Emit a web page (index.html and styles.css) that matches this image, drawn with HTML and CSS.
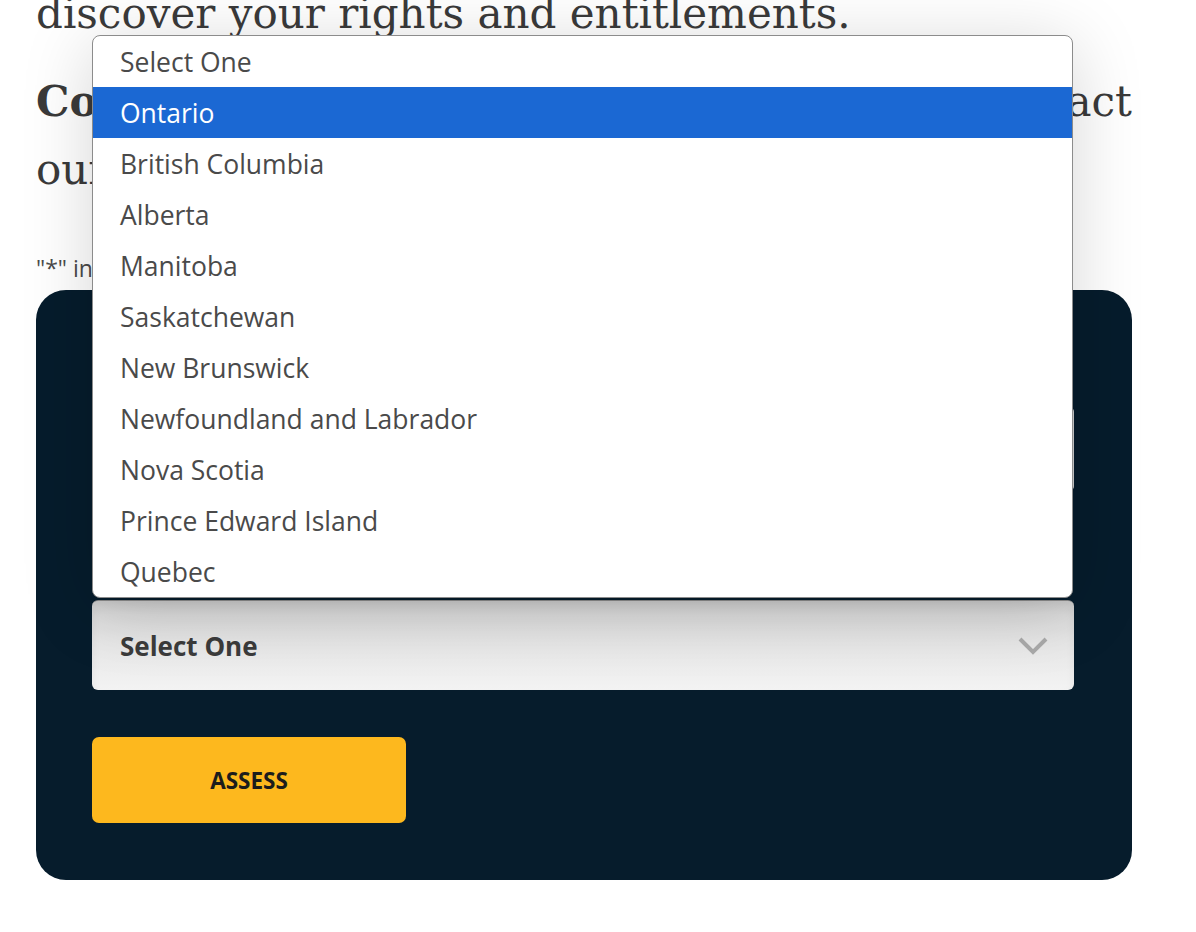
FILE: index.html
```html
<!DOCTYPE html>
<html lang="en">
<head>
<meta charset="utf-8">
<title>Assessment</title>
<link rel="stylesheet" href="styles.css">
</head>
<body>
<main class="page">
  <p class="lead">discover your rights and entitlements.</p>
  <p class="lead intro"><span class="line"><strong>Complete our assessment</strong> below, or contact</span>our office for a free, no-obligation consultation.</p>
  <p class="note">"*" indicates required fields</p>

  <form class="panel">
    <div class="field">
      <label class="label">Full Name*</label>
      <div class="input"></div>
    </div>
    <div class="field field-select">
      <label class="label">Province*</label>
      <div class="select-wrap">
        <div class="select">
          <span class="select-value">Select One</span>
          <svg class="chevron" width="30" height="18" viewBox="0 0 30 18"><path d="M2 2 L15 15 L28 2" fill="none" stroke="#a9a9a9" stroke-width="4"/></svg>
        </div>
        <ul class="listbox">
          <li class="option">Select One</li>
          <li class="option active">Ontario</li>
          <li class="option">British Columbia</li>
          <li class="option">Alberta</li>
          <li class="option">Manitoba</li>
          <li class="option">Saskatchewan</li>
          <li class="option">New Brunswick</li>
          <li class="option">Newfoundland and Labrador</li>
          <li class="option">Nova Scotia</li>
          <li class="option">Prince Edward Island</li>
          <li class="option">Quebec</li>
        </ul>
      </div>
    </div>
    <div class="actions">
      <button type="button" class="btn">ASSESS</button>
    </div>
  </form>
</main>
</body>
</html>
```

FILE: styles.css
```css
* { box-sizing: border-box; }

html, body {
  margin: 0;
  padding: 0;
  background: #ffffff;
  overflow: hidden;
}

.page {
  width: 1196px;
  padding: 0 64px 0 36px;
  margin-top: -20px;
}

.lead {
  margin: 0 0 20px;
  font-family: "DejaVu Serif", "Liberation Serif", serif;
  font-size: 42px;
  line-height: 68px;
  color: #3a3a3a;
}

.intro { margin-bottom: 0; }

.intro .line {
  display: block;
  text-align: justify;
  text-align-last: justify;
}

.intro strong { font-weight: 700; }

.note {
  margin: 49px 0 6px;
  font-family: "Open Sans", "Noto Sans", sans-serif;
  font-size: 23px;
  line-height: 31px;
  color: #4a4a4a;
}

.panel {
  display: flex;
  flex-direction: column;
  background: #061c2c;
  border-radius: 30px;
  padding: 56px 58px 57px 56px;
  height: 590px;
}

.field { display: flex; flex-direction: column; }

.label {
  font-family: "Open Sans", "Noto Sans", sans-serif;
  font-size: 20px;
  line-height: 30px;
  color: #ffffff;
  margin-bottom: 30px;
}

.input {
  height: 86px;
  background: #ffffff;
  border: 1px solid #cfcfcf;
  border-radius: 6px;
}

.field-select { margin-top: 38px; }
.field-select .label { margin-bottom: 40px; }

.select-wrap { position: relative; }

.select {
  display: flex;
  align-items: center;
  justify-content: space-between;
  height: 90px;
  padding: 0 26px 0 28px;
  border-radius: 6px;
  border-top: 1px solid #8a8a8a;
  background: linear-gradient(to bottom, #d6d6d6 0%, #e6e6e6 45%, #f3f3f3 100%);
  box-shadow: inset 0 6px 10px rgba(0,0,0,0.06);
}

.select-value {
  font-family: "Open Sans", "Noto Sans", sans-serif;
  font-weight: 700;
  font-size: 26px;
  color: #3b3b3b;
}

.chevron { display: block; }

.listbox {
  position: absolute;
  left: 0;
  bottom: calc(100% + 2px);
  width: 981px;
  margin: 0;
  padding: 0;
  list-style: none;
  background: #ffffff;
  border: 1px solid #8c8c8c;
  border-radius: 8px;
  box-shadow: 0 10px 70px rgba(0,0,0,0.17);
  overflow: hidden;
}

.option {
  height: 51px;
  padding-left: 27px;
  display: flex;
  align-items: center;
  font-family: "Open Sans", "Noto Sans", sans-serif;
  font-size: 26.5px;
  color: #4a4a4a;
}

.option.active {
  background: #1b68d3;
  color: #ffffff;
}

.actions { margin-top: 47px; }

.btn {
  width: 314px;
  height: 86px;
  border: 0;
  border-radius: 7px;
  background: #fdb81e;
  font-family: "Open Sans", "Noto Sans", sans-serif;
  font-weight: 700;
  font-size: 22.5px;
  color: #1c1c1c;
  cursor: pointer;
}
```
